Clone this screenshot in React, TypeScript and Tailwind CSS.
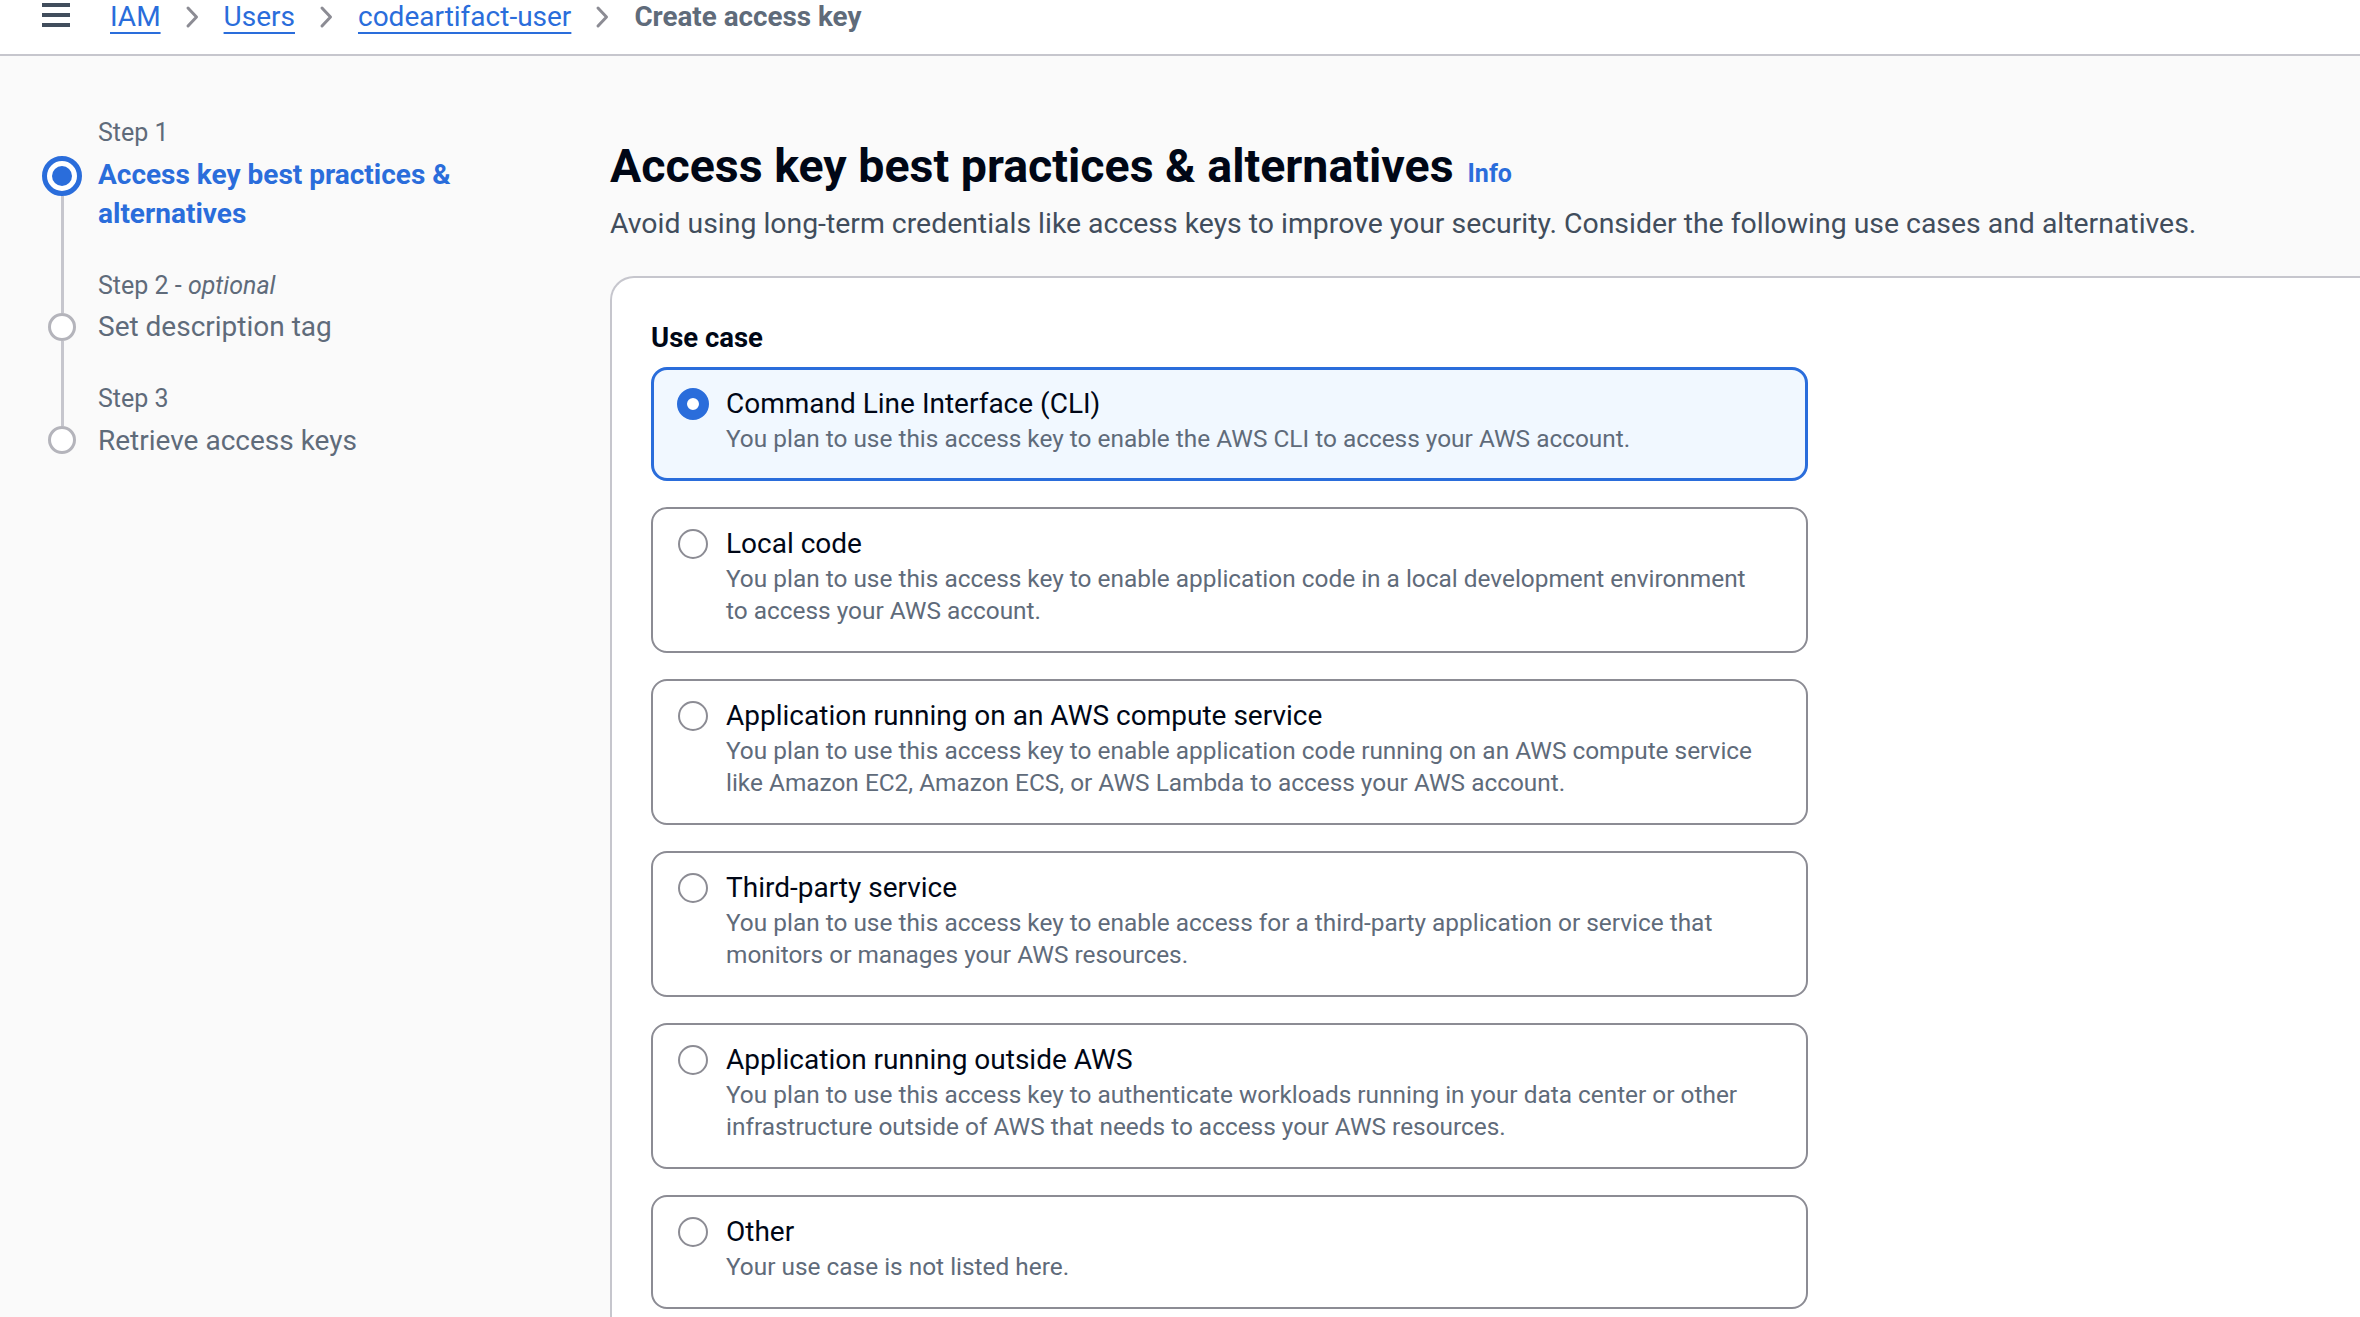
import React from 'react';

type UseCase = {
  id: string;
  title: string;
  description: string[];
};

const USE_CASES: UseCase[] = [
  {
    id: 'cli',
    title: 'Command Line Interface (CLI)',
    description: ['You plan to use this access key to enable the AWS CLI to access your AWS account.'],
  },
  {
    id: 'local',
    title: 'Local code',
    description: [
      'You plan to use this access key to enable application code in a local development environment',
      'to access your AWS account.',
    ],
  },
  {
    id: 'compute',
    title: 'Application running on an AWS compute service',
    description: [
      'You plan to use this access key to enable application code running on an AWS compute service',
      'like Amazon EC2, Amazon ECS, or AWS Lambda to access your AWS account.',
    ],
  },
  {
    id: 'third-party',
    title: 'Third-party service',
    description: [
      'You plan to use this access key to enable access for a third-party application or service that',
      'monitors or manages your AWS resources.',
    ],
  },
  {
    id: 'outside',
    title: 'Application running outside AWS',
    description: [
      'You plan to use this access key to authenticate workloads running in your data center or other',
      'infrastructure outside of AWS that needs to access your AWS resources.',
    ],
  },
  {
    id: 'other',
    title: 'Other',
    description: ['Your use case is not listed here.'],
  },
];

const Chevron = () => (
  <svg width="15" height="24" viewBox="0 0 15 24" fill="none">
    <path d="M3 3l8.5 9L3 21" stroke="#8c8c94" strokeWidth="3" strokeLinecap="round" strokeLinejoin="round" />
  </svg>
);

const Header = () => (
  <header className="h-[56px] bg-white border-b-2 border-[#c6c6cd] flex items-start">
    <div className="flex items-center h-[33px] pl-[42px]">
      <div className="w-[28px] flex flex-col gap-[6.7px] mt-[-3px]">
        <span className="block h-[3.3px] bg-[#414d5c]" />
        <span className="block h-[3.3px] bg-[#414d5c]" />
        <span className="block h-[3.3px] bg-[#414d5c]" />
      </div>
      <nav className="flex items-center gap-[24px] ml-[40px] text-[28px] leading-[33px]">
        <a className="text-[#2a6ddb] underline decoration-2 underline-offset-[6px]">IAM</a>
        <Chevron />
        <a className="text-[#2a6ddb] underline decoration-2 underline-offset-[6px]">Users</a>
        <Chevron />
        <a className="text-[#2a6ddb] underline decoration-2 underline-offset-[6px]">codeartifact-user</a>
        <Chevron />
        <span className="text-[27.8px] font-bold text-[#5f6b7a]">Create access key</span>
      </nav>
    </div>
  </header>
);

type StepProps = {
  label: React.ReactNode;
  title: React.ReactNode;
  active?: boolean;
  first?: boolean;
  last?: boolean;
};

const Step = ({ label, title, active, first, last }: StepProps) => (
  <div className="flex gap-[16px]">
    <div className="w-[40px] shrink-0 flex flex-col items-center">
      <div className={`w-[3px] ${active ? 'h-[39px]' : 'h-[43px]'} ${first ? '' : 'bg-[#c6c6cd]'}`} />
      {active ? (
        <div className="w-[40px] h-[40px] rounded-full border-[5px] border-[#2a6ddb] bg-white flex items-center justify-center">
          <div className="w-[20px] h-[20px] rounded-full bg-[#2a6ddb]" />
        </div>
      ) : (
        <div className="w-[28px] h-[28px] rounded-full border-[3px] border-[#b4b4bb] bg-white" />
      )}
      <div className={`w-[3px] flex-1 ${last ? '' : 'bg-[#c6c6cd]'}`} />
    </div>
    <div className={last ? '' : 'pb-[37px]'}>
      <div className="text-[25px] leading-[32px] text-[#5f6b7a]">{label}</div>
      <div
        className={`mt-[5.5px] leading-[39px] ${
          active ? 'text-[28px] font-bold text-[#2a6ddb]' : 'text-[28px] text-[#5f6b7a]'
        }`}
      >
        {title}
      </div>
    </div>
  </div>
);

const SideNav = () => (
  <aside className="w-[610px] shrink-0 pl-[42px] pt-[61px]">
    <Step
      first
      active
      label="Step 1"
      title={
        <>
          Access key best practices &amp;
          <br />
          alternatives
        </>
      }
    />
    <Step
      label={
        <>
          Step 2 - <i>optional</i>
        </>
      }
      title="Set description tag"
    />
    <Step last label="Step 3" title="Retrieve access keys" />
  </aside>
);

const Radio = ({ checked }: { checked: boolean }) =>
  checked ? (
    <div className="w-[32px] h-[32px] rounded-full border-[10px] border-[#2a6ddb] bg-white" />
  ) : (
    <div className="w-[30px] h-[30px] rounded-full border-2 border-[#8c8c94] bg-white" />
  );

const UseCaseCard = ({ item, selected }: { item: UseCase; selected: boolean }) => (
  <div
    className={`flex rounded-[16px] ${
      selected
        ? 'gap-[17px] border-[3px] border-[#2a6ddb] bg-[#f1f8ff] pl-[23px] pt-[15px] pb-[23px]'
        : 'gap-[18px] border-2 border-[#8c8c94] bg-white pl-[25px] pt-[16px] pb-[24px]'
    }`}
  >
    <div className="h-[38px] flex items-center shrink-0">
      <Radio checked={selected} />
    </div>
    <div>
      <div className="text-[28px] leading-[38px] text-[#000716]">{item.title}</div>
      {item.description.map((line, i) => (
        <div key={i} className="text-[24.4px] leading-[32px] text-[#5f6b7a]">
          {line}
        </div>
      ))}
    </div>
  </div>
);

export default function App() {
  const selected = 'cli';

  return (
    <div className="h-[1317px] overflow-hidden bg-[#fafafa] font-[Roboto,Arial,sans-serif]">
      <Header />
      <div className="flex">
        <SideNav />
        <main className="flex-1 pt-[84px]">
          <div className="flex items-baseline gap-[14px]">
            <h1 className="text-[46.5px] leading-[52px] font-bold text-[#000716]">
              Access key best practices &amp; alternatives
            </h1>
            <a className="text-[25px] font-bold text-[#2a6ddb]">Info</a>
          </div>
          <p className="mt-[14px] text-[28.4px] leading-[34px] text-[#414d5c]">
            Avoid using long-term credentials like access keys to improve your security. Consider the following use
            cases and alternatives.
          </p>

          <section className="mt-[35px] bg-white border-t-2 border-l-2 border-[#c6c6cd] rounded-tl-[24px] pl-[39px] pt-[43px] pb-[40px]">
            <h2 className="text-[27.5px] leading-[34px] font-bold text-[#000716] mb-[12px]">Use case</h2>
            <div className="w-[1157px] flex flex-col gap-[26px]">
              {USE_CASES.map((item) => (
                <UseCaseCard key={item.id} item={item} selected={item.id === selected} />
              ))}
            </div>
          </section>
        </main>
      </div>
    </div>
  );
}
